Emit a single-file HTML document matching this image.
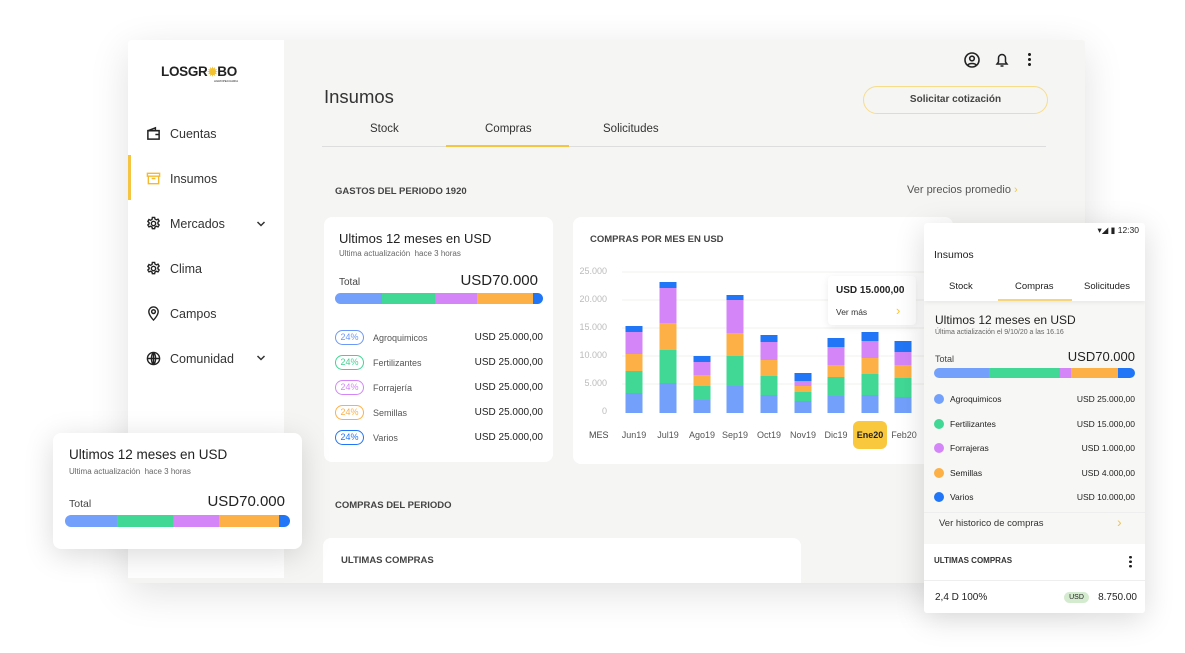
<!DOCTYPE html><html><head><meta charset="utf-8"><style>
*{box-sizing:border-box;margin:0;padding:0}
body{width:1185px;height:653px;background:#fff;font-family:"Liberation Sans",sans-serif;color:#222;position:relative;overflow:hidden}
.a{position:absolute}
.win{left:128px;top:40px;width:957px;height:543px;background:#f5f5f3;box-shadow:0 10px 40px rgba(0,0,0,.12);border-radius:3px;overflow:hidden}
.side{left:0;top:0;width:156px;height:538px;background:#fff}
.nav{left:18px;font-size:12.5px;color:#333;display:flex;align-items:center;gap:9px}
.card{background:#fff;border-radius:8px}
.pill{font-size:9px;border:1px solid;border-radius:8px;width:29px;height:15px;line-height:13px;text-align:center}
.bar{display:flex;height:11px;border-radius:6px;overflow:hidden}
.lbl{font-size:9px;color:#555}
.amt{font-size:10px;color:#222}
.yl{font-size:9px;color:#bbb;right:0;text-align:right;width:30px}
.x{font-size:9px;color:#555;text-align:center;width:34px}
</style></head><body>
<div class="a win">
 <div class="a side">
  <div class="a" style="left:33px;top:24px;font-size:13.5px;font-weight:bold;letter-spacing:-0.3px">LOSGR<span style="color:#f2c230;font-size:12px">✹</span>BO</div>
  <div class="a" style="left:86px;top:39px;font-size:3px">AGROPECUARIA</div>
  <div class="a nav" style="top:86px"><svg width="15" height="15" viewBox="0 0 16 16" fill="none" stroke="#222" stroke-width="1.6"><path d="M2 5h12v9H2z M2 5l8-3v3 M10 9h4"/></svg>Cuentas</div>
  <div class="a" style="left:0;top:115px;width:3px;height:45px;background:#f5c542"></div>
  <div class="a nav" style="top:131px"><svg width="15" height="15" viewBox="0 0 16 16" fill="none" stroke="#f5b92e" stroke-width="1.5"><path d="M1.5 2.5h13v3h-13z M2.5 5.5v8h11v-8 M6 8h4"/></svg>Insumos</div>
  <div class="a nav" style="top:176px"><svg width="15" height="15" viewBox="0 0 16 16" fill="none" stroke="#222" stroke-width="1.5"><circle cx="8" cy="8" r="2.3"/><path d="M6.8 1.5h2.4l.4 1.8 1.5.8 1.7-.7 1.2 2-1.3 1.3v1.6l1.3 1.3-1.2 2-1.7-.7-1.5.8-.4 1.8H6.8l-.4-1.8-1.5-.8-1.7.7-1.2-2 1.3-1.3V7.1L2 5.8l1.2-2 1.7.7 1.5-.8z"/></svg>Mercados</div>
  <svg class="a" style="left:128px;top:180px" width="10" height="8" viewBox="0 0 10 8" fill="none" stroke="#333" stroke-width="1.5"><path d="M1.5 2l3.5 3.5L8.5 2"/></svg>
  <div class="a nav" style="top:221px"><svg width="15" height="15" viewBox="0 0 16 16" fill="none" stroke="#222" stroke-width="1.5"><circle cx="8" cy="8" r="2.3"/><path d="M6.8 1.5h2.4l.4 1.8 1.5.8 1.7-.7 1.2 2-1.3 1.3v1.6l1.3 1.3-1.2 2-1.7-.7-1.5.8-.4 1.8H6.8l-.4-1.8-1.5-.8-1.7.7-1.2-2 1.3-1.3V7.1L2 5.8l1.2-2 1.7.7 1.5-.8z"/></svg>Clima</div>
  <div class="a nav" style="top:266px"><svg width="15" height="15" viewBox="0 0 16 16" fill="none" stroke="#222" stroke-width="1.5"><path d="M8 15s5-5 5-9A5 5 0 0 0 3 6c0 4 5 9 5 9z"/><circle cx="8" cy="6" r="2"/></svg>Campos</div>
  <div class="a nav" style="top:311px"><svg width="15" height="15" viewBox="0 0 16 16" fill="none" stroke="#222" stroke-width="1.5"><circle cx="8" cy="8" r="6.5"/><path d="M1.5 8h13M8 1.5v13M8 1.5c-3 3-3 10 0 13M8 1.5c3 3 3 10 0 13"/></svg>Comunidad</div>
  <svg class="a" style="left:128px;top:314px" width="10" height="8" viewBox="0 0 10 8" fill="none" stroke="#333" stroke-width="1.5"><path d="M1.5 2l3.5 3.5L8.5 2"/></svg>
 </div>
 <div class="a" style="left:835px;top:11px"><svg width="18" height="18" viewBox="0 0 18 18" fill="none" stroke="#222" stroke-width="1.6"><circle cx="9" cy="9" r="7"/><circle cx="9" cy="7.5" r="2.3"/><path d="M5 14c1-2 7-2 8 0"/></svg></div>
 <div class="a" style="left:865px;top:11px"><svg width="18" height="18" viewBox="0 0 18 18" fill="none" stroke="#222" stroke-width="1.5"><path d="M4 13h10l-1.5-2V7a3.5 3.5 0 0 0-7 0v4z M7.5 15h3"/></svg></div>
 <div class="a" style="left:900px;top:12px;width:3px;height:15px;background:radial-gradient(circle,#222 1.4px,transparent 1.6px) 0 0/3px 5px"></div>
 <div class="a" style="left:196px;top:46px;font-size:18.5px;color:#333">Insumos</div>
 <div class="a" style="left:735px;top:46px;width:185px;height:28px;border:1.5px solid #f7dd8a;border-radius:14px;font-size:10px;font-weight:bold;text-align:center;line-height:25px;color:#444">Solicitar cotización</div>
 <div class="a" style="left:242px;top:83px;font-size:11.5px;color:#333">Stock</div>
 <div class="a" style="left:357px;top:83px;font-size:11.5px;color:#333">Compras</div>
 <div class="a" style="left:475px;top:83px;font-size:11.5px;color:#333">Solicitudes</div>
 <div class="a" style="left:194px;top:106px;width:724px;height:1px;background:#ddd"></div>
 <div class="a" style="left:318px;top:105px;width:123px;height:2px;background:#f5c542"></div>
 <div class="a" style="left:207px;top:146px;font-size:9.5px;font-weight:bold;color:#444">GASTOS DEL PERIODO 1920</div>
 <div class="a" style="left:779px;top:144px;font-size:11px;color:#555">Ver precios promedio <span style="color:#f5c542">›</span></div>
 <div class="a" style="left:207px;top:460px;font-size:9.5px;font-weight:bold;color:#444">COMPRAS DEL PERIODO</div>
 <div class="a card" style="left:195px;top:498px;width:478px;height:60px"><div class="a" style="left:18px;top:17px;font-size:9.5px;font-weight:bold;color:#444">ULTIMAS COMPRAS</div></div>
</div>

<div class="a card" style="left:324px;top:217px;width:229px;height:245px">
 <div class="a" style="left:15px;top:14px;font-size:13px">Ultimos 12 meses en USD</div>
 <div class="a" style="left:15px;top:32px;font-size:8px;color:#666">Ultima actualización &nbsp;hace 3 horas</div>
 <div class="a" style="left:15px;top:60px;font-size:10px;color:#444">Total</div>
 <div class="a" style="right:15px;top:55px;font-size:15px">USD70.000</div>
 <div class="a bar" style="left:11px;top:76px;width:208px"><i style="width:47px;background:#72a0fb"></i><i style="width:53px;background:#41d895"></i><i style="width:42px;background:#d486f8"></i><i style="width:56px;background:#fdb045"></i><i style="flex:1;background:#2176f7"></i></div>
</div>
<div class="a" style="left:335px;top:325px;width:208px">
 <div style="display:flex;align-items:center;height:25px"><span class="pill" style="color:#6c98f8">24%</span><span class="lbl" style="margin-left:9px;flex:1">Agroquimicos</span><span class="amt">USD 25.000,00</span></div>
 <div style="display:flex;align-items:center;height:25px"><span class="pill" style="color:#3fd492">24%</span><span class="lbl" style="margin-left:9px;flex:1">Fertilizantes</span><span class="amt">USD 25.000,00</span></div>
 <div style="display:flex;align-items:center;height:25px"><span class="pill" style="color:#d486f8">24%</span><span class="lbl" style="margin-left:9px;flex:1">Forrajería</span><span class="amt">USD 25.000,00</span></div>
 <div style="display:flex;align-items:center;height:25px"><span class="pill" style="color:#fdb045">24%</span><span class="lbl" style="margin-left:9px;flex:1">Semillas</span><span class="amt">USD 25.000,00</span></div>
 <div style="display:flex;align-items:center;height:25px"><span class="pill" style="color:#2176f7">24%</span><span class="lbl" style="margin-left:9px;flex:1">Varios</span><span class="amt">USD 25.000,00</span></div>
</div>

<div class="a card" style="left:573px;top:217px;width:380px;height:247px"></div>
<div class="a" style="left:590px;top:234px;font-size:9.5px;font-weight:bold;color:#444">COMPRAS POR MES EN USD</div>
<div class="a yl" style="left:577px;top:266px">25.000</div>
<div class="a yl" style="left:577px;top:294px">20.000</div>
<div class="a yl" style="left:577px;top:322px">15.000</div>
<div class="a yl" style="left:577px;top:350px">10.000</div>
<div class="a yl" style="left:577px;top:378px">5.000</div>
<div class="a yl" style="left:577px;top:406px">0</div>
<svg class="a" style="left:0;top:0" width="1185" height="653">
<g stroke="#f0f0ee"><path d="M622 272H930M622 300H930M622 328H930M622 356H930M622 384H930"/></g>
<g id="bars"></g>
</svg>
<div class="a" style="left:589px;top:430px;font-size:9px;color:#444">MES</div>
<div class="a" style="left:853px;top:421px;width:34px;height:28px;background:#f9c83d;border-radius:6px"></div>
<div class="a x" style="left:617px;top:430px">Jun19</div>
<div class="a x" style="left:651px;top:430px">Jul19</div>
<div class="a x" style="left:685px;top:430px">Ago19</div>
<div class="a x" style="left:718px;top:430px">Sep19</div>
<div class="a x" style="left:752px;top:430px">Oct19</div>
<div class="a x" style="left:786px;top:430px">Nov19</div>
<div class="a x" style="left:819px;top:430px">Dic19</div>
<div class="a x" style="left:853px;top:430px;color:#222;font-weight:bold">Ene20</div>
<div class="a x" style="left:887px;top:430px">Feb20</div>
<div class="a card" style="left:828px;top:276px;width:88px;height:49px;box-shadow:0 2px 8px rgba(0,0,0,.08);border-radius:4px">
 <div class="a" style="left:8px;top:9px;font-size:10px;font-weight:bold">USD 15.000,00</div>
 <div class="a" style="left:8px;top:31px;font-size:8.5px;color:#333">Ver más</div>
 <div class="a" style="left:68px;top:27px;font-size:13px;color:#f5c542">›</div>
</div>

<div class="a card" style="left:53px;top:433px;width:249px;height:116px;box-shadow:0 6px 30px rgba(0,0,0,.15)">
 <div class="a" style="left:16px;top:14px;font-size:13.5px">Ultimos 12 meses en USD</div>
 <div class="a" style="left:16px;top:34px;font-size:8px;color:#666">Ultima actualización &nbsp;hace 3 horas</div>
 <div class="a" style="left:16px;top:65px;font-size:10.5px;color:#444">Total</div>
 <div class="a" style="right:17px;top:60px;font-size:15px">USD70.000</div>
 <div class="a bar" style="left:12px;top:82px;width:225px;height:12px"><i style="width:52px;background:#72a0fb"></i><i style="width:56px;background:#41d895"></i><i style="width:46px;background:#d486f8"></i><i style="width:60px;background:#fdb045"></i><i style="flex:1;background:#2176f7"></i></div>
</div>

<div class="a" style="left:924px;top:223px;width:221px;height:390px;background:#f7f7f5;box-shadow:0 6px 30px rgba(0,0,0,.15);border-radius:3px;overflow:hidden">
 <div class="a" style="left:0;top:0;width:221px;height:78px;background:#fff;box-shadow:0 2px 4px rgba(0,0,0,.06)"></div>
 <div class="a" style="right:6px;top:2px;font-size:8.5px">▾◢ ▮ 12:30</div>
 <div class="a" style="left:10px;top:26px;font-size:10.5px">Insumos</div>
 <div class="a" style="left:25px;top:58px;font-size:9.5px">Stock</div>
 <div class="a" style="left:91px;top:58px;font-size:9.5px">Compras</div>
 <div class="a" style="left:160px;top:58px;font-size:9.5px">Solicitudes</div>
 <div class="a" style="left:74px;top:76px;width:74px;height:2px;background:#f7d57a"></div>
 <div class="a" style="left:11px;top:90px;font-size:12px">Ultimos 12 meses en USD</div>
 <div class="a" style="left:11px;top:106px;font-size:7px;color:#666">Última actialización el 9/10/20 a las 16.16</div>
 <div class="a" style="left:11px;top:131px;font-size:9px;color:#444">Total</div>
 <div class="a" style="right:10px;top:126px;font-size:13px">USD70.000</div>
 <div class="a bar" style="left:10px;top:145px;width:201px;height:10px"><i style="width:55px;background:#72a0fb"></i><i style="width:71px;background:#41d895"></i><i style="width:11px;background:#d486f8"></i><i style="width:47px;background:#fdb045"></i><i style="flex:1;background:#2176f7"></i></div>
 <div class="a" style="left:10px;top:164px;width:201px;font-size:8.5px">
  <div style="display:flex;align-items:center;height:24.5px"><i style="width:10px;height:10px;border-radius:5px;background:#72a0fb;margin-right:6px"></i><span style="flex:1">Agroquimicos</span>USD 25.000,00</div>
  <div style="display:flex;align-items:center;height:24.5px"><i style="width:10px;height:10px;border-radius:5px;background:#41d895;margin-right:6px"></i><span style="flex:1">Fertilizantes</span>USD 15.000,00</div>
  <div style="display:flex;align-items:center;height:24.5px"><i style="width:10px;height:10px;border-radius:5px;background:#d486f8;margin-right:6px"></i><span style="flex:1">Forrajeras</span>USD 1.000,00</div>
  <div style="display:flex;align-items:center;height:24.5px"><i style="width:10px;height:10px;border-radius:5px;background:#fdb045;margin-right:6px"></i><span style="flex:1">Semillas</span>USD 4.000,00</div>
  <div style="display:flex;align-items:center;height:24.5px"><i style="width:10px;height:10px;border-radius:5px;background:#2176f7;margin-right:6px"></i><span style="flex:1">Varios</span>USD 10.000,00</div>
 </div>
 <div class="a" style="left:0;top:289px;width:221px;height:1px;background:#eee"></div>
 <div class="a" style="left:15px;top:295px;font-size:9.5px;color:#333">Ver historico de compras</div>
 <div class="a" style="left:193px;top:291px;font-size:14px;color:#f5c542">›</div>
 <div class="a" style="left:0;top:321px;width:221px;height:69px;background:#fff"></div>
 <div class="a" style="left:10px;top:333px;font-size:8px;font-weight:bold;color:#333">ULTIMAS COMPRAS</div>
 <div class="a" style="left:205px;top:332px;width:3px;height:13px;background:radial-gradient(circle,#222 1.3px,transparent 1.5px) 0 0/3px 4.5px"></div>
 <div class="a" style="left:0;top:357px;width:221px;height:1px;background:#eee"></div>
 <div class="a" style="left:11px;top:369px;font-size:10px">2,4 D 100%</div>
 <div class="a" style="left:140px;top:369px;width:25px;height:11px;background:#d5ebcf;border-radius:6px;font-size:7px;text-align:center;line-height:11px">USD</div>
 <div class="a" style="right:8px;top:369px;font-size:10px">8.750.00</div>
</div>
<script>
var d=[[634,326,332,354,371,393],[668,282,288,323,350,383],[702,356,362,375,386,400],[735,295,300,333,356,386],[769,335,342,360,376,395],[803,373,381,386,392,401],[836,338,347,365,377,396],[870,332,341,358,374,395],[903,341,352,365,378,397]];
var c=["#2176f7","#d486f8","#fdb045","#41d895","#72a0fb"],s="";
d.forEach(function(b){for(var i=0;i<5;i++){var y=b[i+1],y2=i<4?b[i+2]:413;s+='<rect x="'+(b[0]-8.5)+'" y="'+y+'" width="17" height="'+(y2-y)+'" fill="'+c[i]+'"/>';}});
document.getElementById("bars").innerHTML=s;
</script>
</body></html>
